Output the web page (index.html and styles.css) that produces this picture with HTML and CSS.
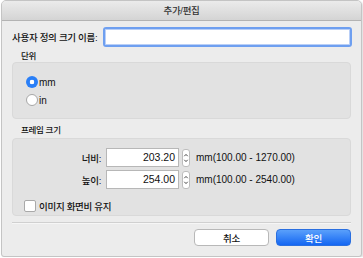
FILE: index.html
```html
<!DOCTYPE html>
<html lang="ko">
<head>
    <meta charset="UTF-8">
    <title>추가/편집</title>
    <link rel="stylesheet" href="styles.css">
</head>
<body>
    <div class="window">
        <div class="titlebar">추가/편집</div>
        <div class="content">
            <div class="name-row">
                <label for="sizeName">사용자 정의 크기 이름:</label>
                <input type="text" id="sizeName" class="name-input">
            </div>

            <div class="group-label">단위</div>
            <div class="group units">
                <label class="radio-row"><span class="radio checked"></span><span class="latin">mm</span></label>
                <label class="radio-row"><span class="radio"></span><span class="latin">in</span></label>
            </div>

            <div class="group-label frame-label">프레임 크기</div>
            <div class="group frame">
                <div class="field-row">
                    <span class="field-label">너비:</span>
                    <span class="number-box">203.20</span>
                    <span class="stepper">
                        <svg width="8" height="18" viewBox="0 0 8 18"><path d="M2.3 7.2 L4 5.4 L5.7 7.2 M2.3 10.8 L4 12.6 L5.7 10.8" fill="none" stroke="#4a4a4a" stroke-width="1"/></svg>
                    </span>
                    <span class="range">mm(100.00 - 1270.00)</span>
                </div>
                <div class="field-row">
                    <span class="field-label">높이:</span>
                    <span class="number-box">254.00</span>
                    <span class="stepper">
                        <svg width="8" height="18" viewBox="0 0 8 18"><path d="M2.3 7.2 L4 5.4 L5.7 7.2 M2.3 10.8 L4 12.6 L5.7 10.8" fill="none" stroke="#4a4a4a" stroke-width="1"/></svg>
                    </span>
                    <span class="range">mm(100.00 - 2540.00)</span>
                </div>
                <label class="check-row"><span class="checkbox"></span>이미지 화면비 유지</label>
            </div>

            <div class="separator"></div>

            <div class="buttons">
                <button class="btn">취소</button>
                <button class="btn primary">확인</button>
            </div>
        </div>
    </div>
</body>
</html>
```

FILE: styles.css
```css
body {
    margin: 0;
    background: #fff;
    font-family: "Liberation Sans", "Noto Sans CJK KR", sans-serif;
    font-size: 9.5px;
    font-weight: 500;
    letter-spacing: -0.3px;
    color: #111;
}

.latin, .range, .number-box {
    font-size: 10px;
    letter-spacing: 0;
}

.window {
    width: 359px;
    height: 255px;
    margin-left: 1px;
    background: #ececec;
    border: 1px solid #c4c4c4;
    border-radius: 5px 5px 3px 3px;
    box-shadow: 1px 1px 2px rgba(0, 0, 0, 0.15);
    overflow: hidden;
}

.titlebar {
    height: 19px;
    line-height: 19px;
    text-align: center;
    background: linear-gradient(#ebebeb, #d4d4d4);
    border-bottom: 1px solid #b3b3b3;
    color: #333;
}

.content {
    padding: 6px 10px 0 10px;
}

.name-row {
    display: flex;
    align-items: center;
    gap: 6px;
    height: 20px;
    margin-right: -1px;
}

.name-input {
    flex: 1;
    height: 20px;
    box-sizing: border-box;
    margin: 0;
    padding: 0;
    border: 2px solid #6e9ff0;
    border-radius: 3px;
    box-shadow: inset 0 0 0 1px #b9cff7;
    outline: none;
    background: #fff;
}

.group-label {
    font-size: 8.5px;
    line-height: 12px;
    margin: 3px 0 0 9px;
}

.frame-label {
    margin: 5px 0 2px 9px;
}

.group {
    background: #e2e2e2;
    border: 1px solid #d9d9d9;
    border-radius: 4px;
}

.units {
    height: 57px;
    padding: 13px 0 0 13px;
    box-sizing: border-box;
    display: flex;
    flex-direction: column;
    gap: 6px;
}

.radio-row, .check-row {
    display: flex;
    align-items: center;
    height: 12px;
}

.radio {
    width: 12px;
    height: 12px;
    border-radius: 50%;
    border: 1px solid #a7a7a7;
    background: #fff;
    box-sizing: border-box;
    margin-right: 1px;
}

.radio.checked {
    border: none;
    background: radial-gradient(circle, #fff 2px, #2a7ff7 2.6px);
}

.frame {
    height: 78px;
    padding: 9px 0 0 0;
    box-sizing: border-box;
    display: flex;
    flex-direction: column;
    gap: 3px;
}

.field-row {
    display: flex;
    align-items: center;
    height: 19px;
}

.field-label {
    width: 88px;
    text-align: right;
    margin-right: 5px;
}

.number-box {
    width: 73px;
    height: 19px;
    box-sizing: border-box;
    background: #fff;
    border: 1px solid #b7b7b7;
    text-align: right;
    line-height: 17px;
    padding-right: 3px;
    font-size: 10.5px;
}

.stepper {
    width: 8px;
    height: 18px;
    margin-left: 3px;
    box-sizing: border-box;
    border: 1px solid #bdbdbd;
    border-radius: 3px;
    background: #fff;
    display: flex;
    align-items: center;
    justify-content: center;
    overflow: hidden;
}

.stepper svg {
    flex: none;
}

.range {
    margin-left: 6px;
}

.check-row {
    margin: 8px 0 0 11px;
}

.checkbox {
    width: 12px;
    height: 12px;
    border: 1px solid #a9a9a9;
    border-radius: 2px;
    background: #fff;
    box-sizing: border-box;
    margin-right: 3px;
}

.separator {
    height: 1px;
    background: #d0d0d0;
    border-bottom: 1px solid #f6f6f6;
    margin-top: 6px;
}

.buttons {
    display: flex;
    justify-content: flex-end;
    gap: 7px;
    margin-top: 5px;
}

.btn {
    width: 75px;
    height: 17px;
    padding: 0;
    font-family: inherit;
    font-size: 9.5px;
    font-weight: 500;
    letter-spacing: -0.3px;
    color: #111;
    background: #fff;
    border: 1px solid #b8b8b8;
    border-radius: 4px;
}

.btn.primary {
    color: #fff;
    background: linear-gradient(#5aa0fb, #1466f2);
    border-color: #2a6fe0;
}
```
